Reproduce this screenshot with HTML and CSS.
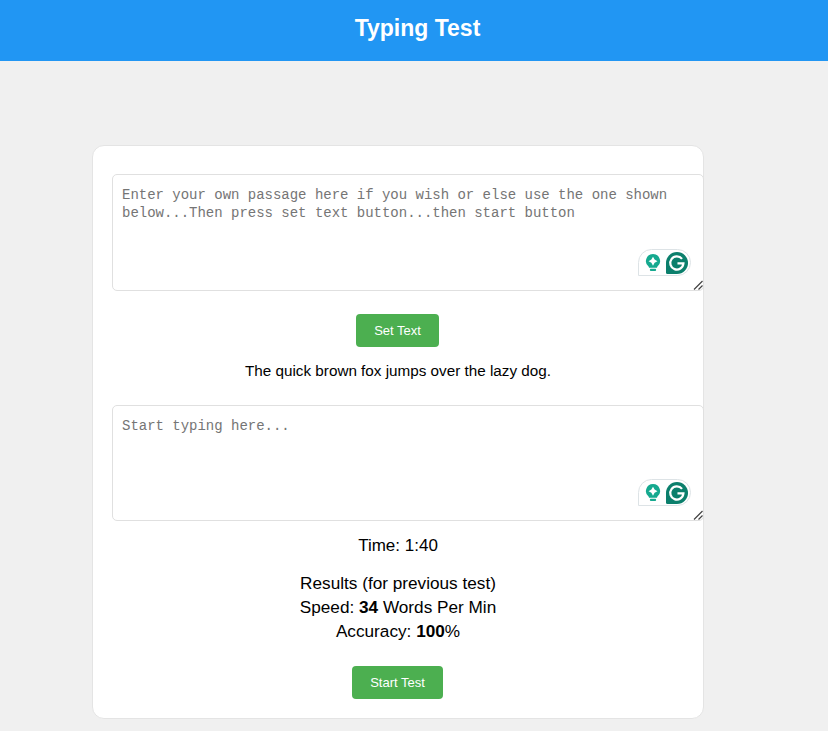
FILE: index.html
```html
<!DOCTYPE html>
<html lang="en">
<head>
  <meta charset="UTF-8" />
  <meta name="viewport" content="width=device-width, initial-scale=1.0"/>
  <title>Typing Test</title>
  <link rel="stylesheet" href="styles.css">
</head>
<body>
  <h1>Typing Test</h1>

  <div class="container">
    <div class="input-wrap">
      <textarea class="passage-input" placeholder="Enter your own passage here if you wish or else use the one shown below...Then press set text button...then start button"></textarea>
      <div class="grammarly">
        <svg class="bulb" viewBox="0 0 18 20" width="16" height="18">
          <path fill="#15a98f" d="M9 0a8 8 0 0 1 4.600 14.500v.8H4.400v-.8A8 8 0 0 1 9 0z"/>
          <path fill="#fff" d="M9 3l1.800 3.200L14 8l-3.200 1.800L9 13l-1.800-3.200L4 8l3.200-1.800z"/>
          <rect fill="#15a98f" x="5.500" y="16.500" width="7" height="2.500" rx="1"/>
        </svg>
        <svg class="g-logo" viewBox="0 0 24 24" width="22" height="22">
          <path fill="#0b7f6c" d="M12 0a12 12 0 1 1 0 24H1.500A1.500 1.500 0 0 1 0 22.500V12A12 12 0 0 1 12 0z"/>
          <path fill="none" stroke="#fff" stroke-width="2.400" d="M17.500 7.500a7.200 7.200 0 1 0 1.500 5H12.500"/>
        </svg>
      </div>
      <svg class="grip" viewBox="0 0 10 10" width="10" height="10">
        <path fill="none" stroke="#444" stroke-width="1.200" d="M9.500 1L1 9.500M9.500 5.500L5.500 9.500"/>
      </svg>
    </div>

    <button class="btn set-btn">Set Text</button>

    <p class="sample">The quick brown fox jumps over the lazy dog.</p>

    <div class="input-wrap typing-wrap">
      <textarea class="typing-input" placeholder="Start typing here..."></textarea>
      <div class="grammarly">
        <svg class="bulb" viewBox="0 0 18 20" width="16" height="18">
          <path fill="#15a98f" d="M9 0a8 8 0 0 1 4.600 14.500v.8H4.400v-.8A8 8 0 0 1 9 0z"/>
          <path fill="#fff" d="M9 3l1.800 3.200L14 8l-3.200 1.800L9 13l-1.800-3.200L4 8l3.200-1.800z"/>
          <rect fill="#15a98f" x="5.500" y="16.500" width="7" height="2.500" rx="1"/>
        </svg>
        <svg class="g-logo" viewBox="0 0 24 24" width="22" height="22">
          <path fill="#0b7f6c" d="M12 0a12 12 0 1 1 0 24H1.500A1.500 1.500 0 0 1 0 22.500V12A12 12 0 0 1 12 0z"/>
          <path fill="none" stroke="#fff" stroke-width="2.400" d="M17.500 7.500a7.200 7.200 0 1 0 1.500 5H12.500"/>
        </svg>
      </div>
      <svg class="grip" viewBox="0 0 10 10" width="10" height="10">
        <path fill="none" stroke="#444" stroke-width="1.200" d="M9.500 1L1 9.500M9.500 5.500L5.500 9.500"/>
      </svg>
    </div>

    <div class="timer">Time: 1:40</div>

    <div class="results">
      <div>Results (for previous test)</div>
      <div>Speed: <b>34</b> Words Per Min</div>
      <div>Accuracy: <b>100</b>%</div>
    </div>

    <button class="btn start-btn">Start Test</button>
  </div>
</body>
</html>
```

FILE: styles.css
```css
body {
  margin: 0;
  font-family: "Liberation Sans", Arial, sans-serif;
  background-color: #f0f0f0;
  color: #000;
}

h1 {
  background-color: #2196F3;
  color: white;
  font-size: 23px;
  line-height: 28px;
  text-align: center;
  margin: 0;
  padding: 14px 0 19px 7px;
}

.container {
  box-sizing: border-box;
  width: 612px;
  margin: 84px 0 0 92px;
  padding: 28px 19px 19px;
  background: white;
  border: 1px solid #e4e4e4;
  border-radius: 12px;
  text-align: center;
}

.input-wrap {
  position: relative;
  width: 592px;
  height: 117px;
}

.typing-wrap {
  height: 116px;
}

textarea {
  display: block;
  box-sizing: border-box;
  width: 100%;
  height: 100%;
  padding: 11px 9px 10px;
  margin: 0;
  border: 1px solid #e0e0e0;
  border-radius: 5px;
  background: white;
  font-family: "Liberation Mono", monospace;
  font-size: 14px;
  letter-spacing: -0.015px;
  line-height: 18px;
  resize: none;
}

textarea::placeholder {
  color: #757575;
}

.grammarly {
  position: absolute;
  right: 13px;
  bottom: 15px;
  box-sizing: border-box;
  display: flex;
  align-items: center;
  justify-content: space-between;
  width: 53px;
  height: 27px;
  padding: 0 2px 0 6px;
  border: 1px solid #dde3e6;
  border-radius: 14px 14px 14px 0;
  background: white;
}

.grip {
  position: absolute;
  right: 1px;
  bottom: 1px;
}

.btn {
  padding: 0;
  height: 33px;
  background-color: #4CAF50;
  color: white;
  border: none;
  border-radius: 4px;
  font-family: "Liberation Sans", Arial, sans-serif;
  font-size: 13px;
  cursor: pointer;
}

.set-btn {
  display: block;
  width: 83px;
  margin: 23px 0 0 244px;
}

.sample {
  width: 572px;
  margin: 14px 0 25px;
  font-size: 15.25px;
  line-height: 19px;
}

.timer {
  width: 572px;
  margin-top: 15px;
  font-size: 17px;
  line-height: 20px;
}

.results {
  width: 572px;
  margin-top: 15px;
  font-size: 17.2px;
  line-height: 24px;
}

.start-btn {
  display: block;
  width: 91px;
  margin: 23px 0 0 240px;
}
```
